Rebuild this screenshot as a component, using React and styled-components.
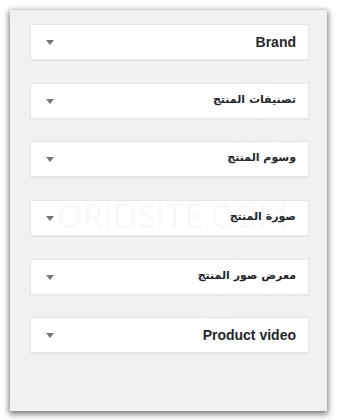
import React from 'react';
import styled, { createGlobalStyle } from 'styled-components';

const GlobalStyle = createGlobalStyle`
  html, body {
    margin: 0;
    padding: 0;
    background: #ffffff;
  }
  body {
    font-family: "Liberation Sans", "DejaVu Sans", Arial, sans-serif;
  }
`;

const Page = styled.div`
  padding: 10px 0 0 10px;
  width: 337px;
  height: 420px;
  box-sizing: border-box;
`;

const Panel = styled.div`
  position: relative;
  width: 317px;
  height: 401px;
  box-sizing: border-box;
  background: #f1f1f1;
  box-shadow: 0 2px 6px 1px rgba(0, 0, 0, 0.55);
  padding: 14px 18px 0 20px;
  display: flex;
  flex-direction: column;
  gap: 22.7px;
  overflow: hidden;
`;

const Box = styled.div`
  height: 36px;
  box-sizing: border-box;
  background: #ffffff;
  border: 1px solid #e6e6e6;
  box-shadow: 0 1px 1px rgba(0, 0, 0, 0.04);
  display: flex;
  align-items: center;
  justify-content: space-between;
  padding: 0 12px 0 15px;
`;

const Arrow = styled.span`
  width: 0;
  height: 0;
  border-left: 4px solid transparent;
  border-right: 4px solid transparent;
  border-top: 5px solid #72777c;
  margin-top: 1px;
`;

const Title = styled.span`
  font-weight: 700;
  color: #23282d;
  line-height: 1;
  font-family: ${(p) =>
    p.$ar ? '"DejaVu Sans", "Liberation Sans", sans-serif' : '"Liberation Sans", Arial, sans-serif'};
  font-size: ${(p) => (p.$ar ? '11px' : '14px')};
  margin-top: ${(p) => (p.$ar ? '-3px' : '0')};
`;

const Watermark = styled.div`
  position: absolute;
  left: 47px;
  top: 186px;
  font-family: Lato, "Open Sans", sans-serif;
  font-weight: 400;
  font-size: 32px;
  letter-spacing: 0.5px;
  color: rgba(0, 0, 0, 0.035);
  pointer-events: none;
  white-space: nowrap;
`;

const items = [
  { label: 'Brand', ar: false },
  { label: 'تصنيفات المنتج', ar: true },
  { label: 'وسوم المنتج', ar: true },
  { label: 'صورة المنتج', ar: true },
  { label: 'معرض صور المنتج', ar: true },
  { label: 'Product video', ar: false },
];

export default function App() {
  return (
    <Page>
      <GlobalStyle />
      <Panel>
        {items.map((it) => (
          <Box key={it.label}>
            <Arrow />
            <Title $ar={it.ar} dir={it.ar ? 'rtl' : 'ltr'}>
              {it.label}
            </Title>
          </Box>
        ))}
        <Watermark aria-hidden="true">ORIDSITE.COM</Watermark>
      </Panel>
    </Page>
  );
}
